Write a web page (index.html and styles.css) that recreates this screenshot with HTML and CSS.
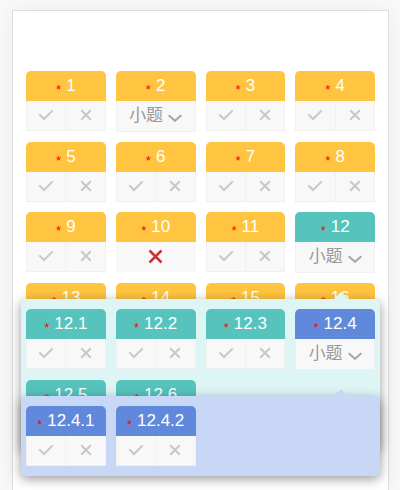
FILE: index.html
```html
<!DOCTYPE html>
<html lang="zh-CN">
<head>
<meta charset="utf-8">
<meta name="viewport" content="width=device-width, initial-scale=1">
<title>小题</title>
<link rel="stylesheet" href="styles.css">
</head>
<body>
<svg class="defs" aria-hidden="true">
  <symbol id="check" viewBox="0 0 16 12"><path d="M1.3 5.4 6 10 14.7 1.4"/></symbol>
  <symbol id="cross" viewBox="0 0 12 12"><path d="M1.2 1.2 10.8 10.8M10.8 1.2 1.2 10.8"/></symbol>
  <symbol id="down" viewBox="0 0 14 8"><path d="M.6 1.2 7 6.8 13.4 1.2"/></symbol>
</svg>
<main class="sheet" id="sheet"></main>
<script src="app.js"></script>
</body>
</html>
```
FILE: styles.css
```css
* {
  box-sizing: border-box;
}

body {
  display: flex;
  flex-direction: column;
  min-height: 100vh;
  margin: 0;
  padding: 10px 11px 0 12px;
  background: #f9f9f9;
  font-family: "Liberation Sans", "Noto Sans CJK SC", sans-serif;
  font-size: 17px;
}

.defs {
  position: absolute;
  width: 0;
  height: 0;
}

.sheet {
  flex: 1;
  display: flex;
  flex-direction: column;
  gap: 10px;
  padding: 60px 13px 0;
  background: #fff;
  border: 1px solid #ddd;
  border-bottom: 0;
  box-shadow: 0 0 20px rgba(0, 0, 0, 0.06);
}

.row {
  position: relative;
  display: grid;
  grid-template-columns: repeat(4, 1fr);
  align-items: start;
  gap: 10px;
}

.card-head {
  height: 30px;
  border-radius: 5px 5px 0 0;
  background: #ffc440;
  color: #fff;
  line-height: 30px;
  text-align: center;
}

.teal {
  background: #56c4bd;
}

.blue {
  background: #6189db;
}

.star {
  margin-right: 5px;
  color: #f00;
  font-size: 13px;
  line-height: 1;
  vertical-align: -3px;
}

.card-body {
  display: flex;
  height: 30px;
  background: #f8f8f8;
  border: 1px solid #f0f0f0;
  border-top: 0;
}

.card-body.wide {
  height: 31px;
}

.card-body.wrong {
  border-color: #f8f8f8;
}

button {
  flex: 1;
  display: flex;
  align-items: center;
  justify-content: center;
  gap: 5px;
  padding: 0 0 1px;
  border: 0;
  background: none;
  color: #999;
  font: inherit;
  line-height: 30px;
}

button + button {
  border-left: 1px solid #f0f0f0;
}

.icon {
  width: 12px;
  height: 12px;
  fill: none;
  stroke: #c8c8c8;
  stroke-width: 2;
}

.icon.check {
  width: 16px;
}

.icon.down {
  width: 14px;
  height: 8px;
  margin-top: 4px;
  stroke: #a5a5a5;
  stroke-width: 2;
}

.wrong .icon {
  width: 15px;
  height: 15px;
  stroke: #c93535;
}

.popup {
  position: absolute;
  z-index: 1;
  top: calc(100% + 26px);
  left: -5px;
  right: -5px;
  display: flex;
  flex-direction: column;
  gap: 10px;
  padding: 10px 5px;
  border-radius: 5px;
  background: #ddf6f5;
  box-shadow: 0 3px 12px rgba(0, 0, 0, 0.4);
}

.popup::before {
  content: "";
  position: absolute;
  bottom: 100%;
  right: 32px;
  border: 7px solid transparent;
  border-top: 0;
  border-bottom-color: #ddf6f5;
}

.popup .popup {
  background: #c9d7f6;
}

.popup .popup::before {
  border-bottom-color: #c9d7f6;
}
```
FILE: app.js
```js
const icon = (name) =>
  `<svg class="icon ${name}" aria-hidden="true"><use href="#${name}"/></svg>`;

const bodies = {
  mark: `<div class="card-body"><button type="button" aria-label="正确">${icon("check")}</button><button type="button" aria-label="错误">${icon("cross")}</button></div>`,
  wrong: `<div class="card-body wrong"><button type="button" aria-label="错误">${icon("cross")}</button></div>`,
  sub: `<div class="card-body wide"><button type="button">小题${icon("down")}</button></div>`
};

const card = (label, kind = "mark", color = "") =>
  `<section class="card"><div class="card-head ${color}"><span class="star">*</span>${label}</div>${bodies[kind]}</section>`;

const row = (cards, popup = "") =>
  `<div class="row">${cards.join("")}${popup}</div>`;

const popup = (rows) => `<div class="popup">${rows.join("")}</div>`;

const third = popup([
  row([card("12.4.1", "mark", "blue"), card("12.4.2", "mark", "blue")])
]);

const second = popup([
  row([
    card("12.1", "mark", "teal"),
    card("12.2", "mark", "teal"),
    card("12.3", "mark", "teal"),
    card("12.4", "sub", "blue")
  ], third),
  row([card("12.5", "mark", "teal"), card("12.6", "mark", "teal")])
]);

document.getElementById("sheet").innerHTML = [
  row([card("1"), card("2", "sub"), card("3"), card("4")]),
  row([card("5"), card("6"), card("7"), card("8")]),
  row([card("9"), card("10", "wrong"), card("11"), card("12", "sub", "teal")], second),
  row([card("13"), card("14"), card("15"), card("16")])
].join("");
```
